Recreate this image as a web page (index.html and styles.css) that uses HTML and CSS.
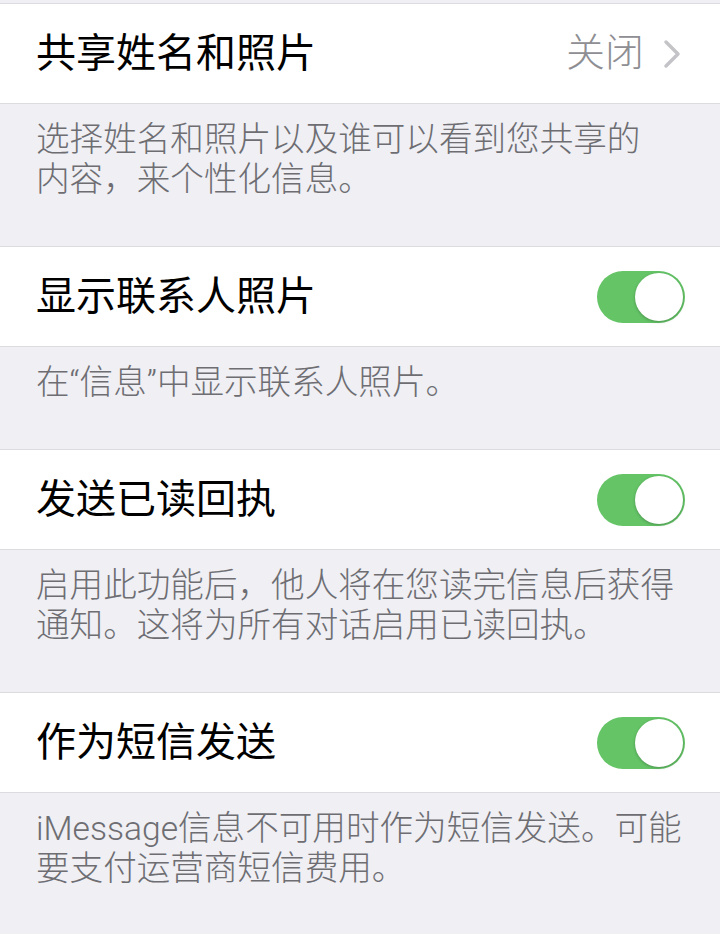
FILE: index.html
```html
<!DOCTYPE html>
<html lang="zh-CN">
<head>
    <meta charset="UTF-8">
    <meta name="viewport" content="width=device-width, initial-scale=1.0">
    <title>信息</title>
    <link rel="stylesheet" href="styles.css">
</head>
<body>
    <div class="settings">
        <div class="cell">
            <span class="cell-title">共享姓名和照片</span>
            <span class="cell-detail">
                关闭
                <svg class="chevron" width="20" height="30" viewBox="0 0 20 30">
                    <polyline points="4,3 16,15 4,27" fill="none" stroke="#c4c4c8" stroke-width="3.5" stroke-linecap="round" stroke-linejoin="round"/>
                </svg>
            </span>
        </div>
        <p class="cell-footer">选择姓名和照片以及谁可以看到您共享的<span class="keep">内容</span>，来个性化信息。</p>

        <div class="cell">
            <span class="cell-title">显示联系人照片</span>
            <span class="switch on"></span>
        </div>
        <p class="cell-footer">在“信息”中显示联系人照片。</p>

        <div class="cell">
            <span class="cell-title">发送已读回执</span>
            <span class="switch on"></span>
        </div>
        <p class="cell-footer">启用此功能后，他人将在您读完信息后获得通知。这将为所有对话启用已读回执。</p>

        <div class="cell">
            <span class="cell-title">作为短信发送</span>
            <span class="switch on"></span>
        </div>
        <p class="cell-footer">iMessage信息不可用时作为短信发送。可能要支付运营商短信费用。</p>
    </div>
</body>
</html>
```

FILE: styles.css
```css
body {
    margin: 0;
    padding: 0;
    background-color: #efeff4;
    font-family: Roboto, "Noto Sans CJK SC", sans-serif;
    overflow: hidden;
}

.settings {
    padding-top: 3px;
}

.cell {
    display: flex;
    align-items: center;
    justify-content: space-between;
    height: 99px;
    padding: 0 35px 0 36px;
    background: #fff;
    border-top: 1px solid #dcdce0;
    border-bottom: 1px solid #dcdce0;
}

.cell-title {
    font-size: 40px;
    color: #000;
    line-height: 1;
}

.cell-detail {
    display: flex;
    align-items: center;
    gap: 18px;
    font-size: 39px;
    font-weight: 300;
    color: #8e8e93;
    line-height: 1;
    margin-right: 3px;
}

.chevron {
    display: block;
}

.cell-footer {
    margin: 0;
    padding: 16px 30px 46px 36px;
    font-size: 33.6px;
    font-weight: 300;
    line-height: 40px;
    color: #6d6d72;
}

.keep {
    white-space: nowrap;
}

.switch {
    position: relative;
    width: 88px;
    height: 52px;
    border-radius: 26px;
    background: #e5e5ea;
}

.switch.on {
    background: #64c466;
}

.switch::after {
    content: "";
    position: absolute;
    top: 2px;
    left: 2px;
    width: 48px;
    height: 48px;
    border-radius: 50%;
    background: #fff;
    box-shadow: 0 1px 3px rgba(0, 0, 0, 0.25);
}

.switch.on::after {
    left: 38px;
}
```
